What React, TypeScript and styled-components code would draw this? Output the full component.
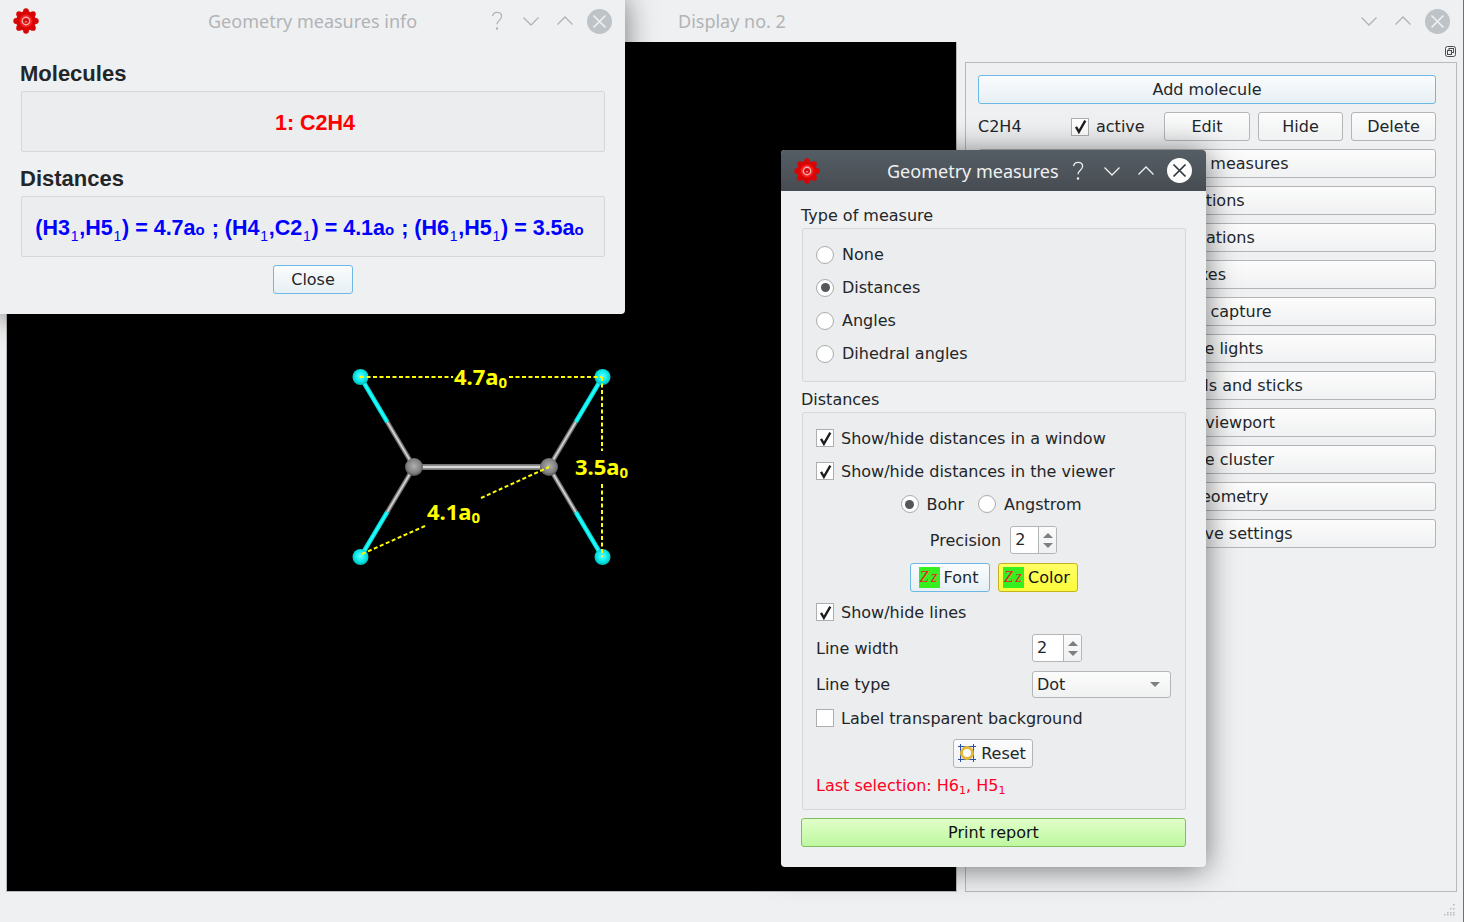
import React from "react";
import styled, { createGlobalStyle } from "styled-components";

const UI = `"DejaVu Sans", sans-serif`;
const TITLE = `"Noto Sans", "Open Sans", sans-serif`;
const HEAD = `"Liberation Sans", Arial, sans-serif`;

const Global = createGlobalStyle`
  html, body { margin: 0; padding: 0; background: #eff0f1; }
  body { width: 1464px; height: 922px; overflow: hidden; font-family: ${UI}; color: #232629; }
  * { box-sizing: border-box; }
`;

const Desktop = styled.div`
  position: relative;
  width: 1464px;
  height: 922px;
  overflow: hidden;
`;

const MainWindow = styled.div`
  width: 1464px;
  height: 922px;
  background: #eff0f1;
  border-right: 1px solid #6e7072;
  display: flex;
  flex-direction: column;
`;

const TitleBar = styled.div<{ $variant?: "active" | "info"; $h: number; $pad: number }>`
  flex: none;
  height: ${(p) => p.$h}px;
  padding: ${(p) => (p.$variant === "info" ? 4 : 0)}px ${(p) => p.$pad}px 0 ${(p) => (p.$variant === "info" ? 17 : 13)}px;
  display: flex;
  align-items: center;
  background: ${(p) => (p.$variant === "active" ? "linear-gradient(#555e65, #474c52)" : "#eff0f1")};
  color: ${(p) => (p.$variant === "active" ? "#eff0f1" : "#b1b4b7")};
  border-radius: ${(p) => (p.$variant === "active" ? "4px 4px 0 0" : "0")};
`;

const TitleText = styled.div<{ $left: number }>`
  position: absolute;
  left: ${(p) => p.$left}px;
  font: 18px ${TITLE};
  white-space: nowrap;
`;

const Controls = styled.div<{ $tail?: number }>`
  margin-left: auto;
  display: flex;
  align-items: center;
  gap: 10px;
  & > :last-child {
    margin-left: ${(p) => p.$tail ?? 0}px;
  }
`;

const ControlIcon = styled.svg`
  width: 24px;
  height: 24px;
  display: block;
  fill: none;
  stroke: currentColor;
  stroke-width: 1.3;
`;

const MainBody = styled.div`
  flex: none;
  height: 850px;
  display: flex;
  padding-left: 6px;
`;

const Viewer = styled.div`
  flex: none;
  width: 951px;
  height: 850px;
  background: #000;
  border: 1px solid #b7b9bb;
  border-top: 0;
`;

const MoleculeSvg = styled.svg`
  display: block;
  width: 949px;
  height: 849px;
`;

const SideColumn = styled.div`
  flex: 1;
  display: flex;
  flex-direction: column;
  padding: 4px 6px 0 8px;
`;

const FloatIcon = styled.svg`
  flex: none;
  align-self: flex-end;
  width: 11px;
  height: 11px;
  margin-right: 1px;
  margin-bottom: 5px;
  fill: none;
  stroke: #4a4d50;
  stroke-width: 1;
`;

const SideFrame = styled.div`
  flex: 1;
  border: 1px solid #b7b9bb;
  padding: 12px 20px 0 12px;
  display: flex;
  flex-direction: column;
  gap: 8px;
`;

const Button = styled.button<{ $tone?: "blue" | "yellow" | "green"; $w?: number }>`
  flex: ${(p) => (p.$w ? "none" : "initial")};
  width: ${(p) => (p.$w ? `${p.$w}px` : "auto")};
  height: 29px;
  padding: 0;
  border-radius: 3px;
  font: 16px ${UI};
  display: flex;
  align-items: center;
  justify-content: center;
  gap: 4px;
  color: ${(p) => (p.$tone === "yellow" || p.$tone === "green" ? "#111" : "#232629")};
  border: 1px solid
    ${(p) =>
      p.$tone === "blue" ? "#6cb8e6" : p.$tone === "yellow" ? "#c3b320" : p.$tone === "green" ? "#7fbf62" : "#b3b5b7"};
  background: ${(p) =>
    p.$tone === "blue"
      ? "linear-gradient(#fbfcfd, #e6eff4)"
      : p.$tone === "yellow"
      ? "linear-gradient(#ffff66, #fbfb3c)"
      : p.$tone === "green"
      ? "linear-gradient(#e0ffc8, #bef7a0)"
      : "linear-gradient(#fcfcfc, #f0f1f2)"};
`;

const IconButton = styled(Button)`
  padding-right: 3px;
`;

const MoleculeRow = styled.div`
  display: flex;
  align-items: center;
  height: 29px;
`;

const MoleculeName = styled.span`
  width: 93px;
  font-size: 16px;
`;

const ActiveCell = styled.label`
  width: 93px;
  display: flex;
  align-items: center;
  gap: 7px;
  font-size: 16px;
`;

const RowButtons = styled.div`
  display: flex;
  gap: 8px;
`;

const Footer = styled.div`
  flex: 1;
  display: flex;
  justify-content: flex-end;
  align-items: flex-start;
  padding: 12px 8px 0 0;
`;

const Grip = styled.svg`
  width: 11px;
  height: 12px;
  fill: #b9bbbd;
`;

const DialogShell = styled.div<{ $x: number; $y: number; $w: number; $h: number }>`
  position: absolute;
  left: ${(p) => p.$x}px;
  top: ${(p) => p.$y}px;
  width: ${(p) => p.$w}px;
  height: ${(p) => p.$h}px;
  background: #eff0f1;
  border-radius: 4px;
  box-shadow: 0 2px 30px rgba(0, 0, 0, 0.52);
`;

const InfoBody = styled.div`
  padding: 18px 20px 0 25px;
  display: flex;
  flex-direction: column;
`;

const InfoHeading = styled.div`
  font: bold 22px/27px ${HEAD};
  margin-left: -1px;
  height: 31px;
  color: #232629;
`;

const InfoBox = styled.div<{ $color: string; $mb: number; $pl?: number; $pr?: number }>`
  height: 61px;
  margin-bottom: ${(p) => p.$mb}px;
  background: #ecedee;
  border: 1px solid #d5d7d8;
  border-radius: 2px;
  display: flex;
  align-items: center;
  justify-content: center;
  color: ${(p) => p.$color};
  font: bold 21.5px ${HEAD};
  white-space: pre;
  padding: 3px ${(p) => p.$pr ?? 0}px 0 ${(p) => p.$pl ?? 0}px;
`;

const InfoLine = styled.span`
  sub {
    font-size: 14px;
    font-weight: 400;
    line-height: 0;
    vertical-align: -6px;
    margin: 0 0.75px;
  }
  small {
    font-size: 15px;
    margin-right: 1px;
  }
`;

const CloseRow = styled.div`
  display: flex;
  justify-content: center;
  margin-top: 8px;
`;

const GeoBody = styled.div`
  padding: 16px 20px 0 20px;
  display: flex;
  flex-direction: column;
`;

const GroupLabel = styled.div`
  height: 21px;
  line-height: 18px;
  font-size: 16px;
`;

const Group = styled.div<{ $pt: number; $pb: number; $mb: number }>`
  margin-left: 1px;
  padding: ${(p) => p.$pt}px 13px ${(p) => p.$pb}px 13px;
  margin-bottom: ${(p) => p.$mb}px;
  background: #ecedee;
  border: 1px solid #d5d7d8;
  border-radius: 2px;
`;

const Row = styled.div<{ $h: number; $center?: boolean; $gap?: number; $shift?: number }>`
  height: ${(p) => p.$h}px;
  display: flex;
  align-items: center;
  justify-content: ${(p) => (p.$center ? "center" : "flex-start")};
  gap: ${(p) => p.$gap ?? 7}px;
  padding-right: ${(p) => p.$shift ?? 0}px;
  font-size: 16px;
  white-space: nowrap;
`;

const RadioItem = styled.span`
  display: inline-flex;
  align-items: center;
  gap: 8px;
`;

const RadioDot = styled.span<{ $on?: boolean }>`
  flex: none;
  width: 18px;
  height: 18px;
  border-radius: 50%;
  border: 1px solid #a9abad;
  background: #fff;
  display: flex;
  align-items: center;
  justify-content: center;
  &::after {
    content: "";
    width: 9px;
    height: 9px;
    border-radius: 50%;
    background: ${(p) => (p.$on ? "#54585c" : "transparent")};
  }
`;

const CheckBox = styled.span`
  flex: none;
  width: 18px;
  height: 18px;
  border: 1px solid #acaeb0;
  background: #fff;
  display: flex;
  align-items: center;
  justify-content: center;
  svg {
    width: 15px;
    height: 15px;
    display: block;
  }
`;

const FormGrid = styled.div<{ $h: number }>`
  height: ${(p) => p.$h}px;
  display: grid;
  grid-template-columns: 216px 1fr;
  align-items: center;
  font-size: 16px;
`;

const Spin = styled.div<{ $w: number; $field: number }>`
  width: ${(p) => p.$w}px;
  height: 28px;
  background: #fff;
  border: 1px solid #b3b5b7;
  border-radius: 3px;
  display: grid;
  grid-template-columns: ${(p) => p.$field}px 1fr;
  font-size: 16px;
`;

const SpinValue = styled.span`
  padding-left: 4px;
  line-height: 26px;
  border-right: 1px solid #b3b5b7;
`;

const SpinArrows = styled.span`
  background: linear-gradient(#fbfbfb, #eff0f1);
  border-radius: 0 2px 2px 0;
  display: flex;
  flex-direction: column;
  align-items: center;
  justify-content: center;
  gap: 5px;
`;

const ArrowUp = styled.i`
  width: 0;
  height: 0;
  border-left: 5px solid transparent;
  border-right: 5px solid transparent;
  border-bottom: 5px solid #7d8083;
`;

const ArrowDown = styled(ArrowUp)`
  border-bottom: 0;
  border-top: 5px solid #7d8083;
`;

const Combo = styled.div`
  width: 139px;
  height: 27px;
  padding: 0 10px 0 4px;
  border: 1px solid #b3b5b7;
  border-radius: 3px;
  background: linear-gradient(#fcfcfc, #f0f1f2);
  display: flex;
  align-items: center;
  justify-content: space-between;
`;

const ZzIcon = styled.span`
  flex: none;
  width: 21px;
  height: 21px;
  background: #35f01e;
  color: #f01c2a;
  font: italic 16px/20px "Liberation Serif", serif;
  letter-spacing: 2.5px;
  text-indent: 1px;
  text-align: left;
`;

const ResetIcon = styled.svg`
  flex: none;
  width: 20px;
  height: 20px;
`;

const LastSelection = styled.div`
  height: 26px;
  line-height: 28px;
  font-size: 16px;
  color: #ff0022;
  sub {
    font-size: 11px;
    line-height: 0;
    vertical-align: -3px;
  }
`;

const SideButtons = [
  "Geometry measures",
  "Rotations",
  "Translations",
  "Axes",
  "Window capture",
  "Manage lights",
  "Scale of balls and sticks",
  "Change viewport",
  "Generate cluster",
  "Build geometry",
  "Load or save settings",
];

function Gear() {
  const lobes = Array.from({ length: 8 }, (_, i) => (i * Math.PI) / 4);
  return (
    <svg width="26" height="26" viewBox="-13 -13 26 26" style={{ display: "block", flex: "none" }}>
      <circle r="10" fill="#d80606" />
      {lobes.map((a, i) => (
        <circle key={i} cx={Math.cos(a) * 9.8} cy={Math.sin(a) * 9.8} r="2.900" fill="#d80505" />
      ))}
      <circle r="6.400" fill="#f51f1f" />
      <circle r="4.400" fill="#f7b0b0" />
      <circle r="3" fill="#d40a0a" />
      <path d="M-1.500 1.200a1.700 1.700 0 0 1 3 0z" fill="#f7c0c0" />
    </svg>
  );
}

function Help() {
  return (
    <ControlIcon viewBox="0 0 24 24">
      <path d="M7.5 7.2c.5-2.6 2.4-3.9 4.6-3.9 2.600 0 4.500 1.700 4.500 4 0 3.900-4.600 3.800-4.600 8" />
      <circle cx="12" cy="19.500" r=".6" fill="currentColor" />
    </ControlIcon>
  );
}
function Down() {
  return (
    <ControlIcon viewBox="0 0 24 24">
      <path d="M4.500 8.500 12 16l7.500-7.500" />
    </ControlIcon>
  );
}
function Up() {
  return (
    <ControlIcon viewBox="0 0 24 24">
      <path d="M4.500 15.500 12 8l7.500 7.500" />
    </ControlIcon>
  );
}
function CloseCircle({ fill, cross }: { fill: string; cross: string }) {
  return (
    <svg width="25" height="25" viewBox="0 0 25 25" style={{ display: "block" }}>
      <circle cx="12.5" cy="12.5" r="12.5" fill={fill} />
      <path d="M6.500 6.500l12 12M18.500 6.500l-12 12" stroke={cross} strokeWidth="1.700" />
    </svg>
  );
}

function Check() {
  return (
    <svg viewBox="0 0 14 14">
      <path d="M2.800 7.300 5.500 12 11.500 1.500" fill="none" stroke="#1b1d1f" strokeWidth="2.200" />
    </svg>
  );
}

function CheckRow({ h, on, children }: { h: number; on?: boolean; children: React.ReactNode }) {
  return (
    <Row $h={h}>
      <CheckBox>{on && <Check />}</CheckBox>
      {children}
    </Row>
  );
}

function Radio({ on, children }: { on?: boolean; children: React.ReactNode }) {
  return (
    <RadioItem>
      <RadioDot $on={on} />
      {children}
    </RadioItem>
  );
}

function SpinBox({ w, field, value }: { w: number; field: number; value: string }) {
  return (
    <Spin $w={w} $field={field}>
      <SpinValue>{value}</SpinValue>
      <SpinArrows>
        <ArrowUp />
        <ArrowDown />
      </SpinArrows>
    </Spin>
  );
}

function Molecule() {
  const hs = [
    [360.5, 377],
    [602.5, 377],
    [360.5, 557],
    [602.5, 557],
  ];
  const cs = [
    [414, 467],
    [549, 467],
    [414, 467],
    [549, 467],
  ];
  return (
    <MoleculeSvg viewBox="7 42 949 849">
      <defs>
        <radialGradient id="hAtom" cx="50%" cy="45%" r="55%">
          <stop offset="0" stopColor="#66ffff" />
          <stop offset="0.6" stopColor="#08eaea" />
          <stop offset="1" stopColor="#00b8b8" />
        </radialGradient>
        <radialGradient id="cAtom" cx="50%" cy="45%" r="55%">
          <stop offset="0" stopColor="#b0b0b0" />
          <stop offset="0.7" stopColor="#808080" />
          <stop offset="1" stopColor="#505050" />
        </radialGradient>
      </defs>
      <line x1="414" y1="467" x2="549" y2="467" stroke="#777" strokeWidth="6" />
      <line x1="414" y1="467" x2="549" y2="467" stroke="#d8d8d8" strokeWidth="2.500" />
      {hs.map(([hx, hy], i) => {
        const [cx, cy] = cs[i];
        const mx = (hx + cx) / 2;
        const my = (hy + cy) / 2;
        return (
          <g key={i}>
            <line x1={mx} y1={my} x2={cx} y2={cy} stroke="#747474" strokeWidth="4.500" />
            <line x1={mx} y1={my} x2={cx} y2={cy} stroke="#d0d0d0" strokeWidth="1.800" />
            <line x1={mx} y1={my} x2={hx} y2={hy} stroke="#06dede" strokeWidth="4.500" />
            <line x1={mx} y1={my} x2={hx} y2={hy} stroke="#22ffff" strokeWidth="2" />
          </g>
        );
      })}
      {cs.slice(0, 2).map(([x, y]) => (
        <circle key={x} cx={x} cy={y} r="9" fill="url(#cAtom)" />
      ))}
      {hs.map(([x, y]) => (
        <circle key={`${x}-${y}`} cx={x} cy={y} r="8" fill="url(#hAtom)" />
      ))}
      <g stroke="#ffff00" strokeWidth="2" strokeDasharray="4 2.500" fill="none">
        <path d="M360 377H453M509 377H602M602 377V451M602 484V557" />
        <path d="M362 554 425 526M481 498 549 467" />
      </g>
      <g fill="#ffff00" fontFamily={TITLE} fontWeight="700" fontSize="22">
        <text x="454" y="385">
          4.7a<tspan fontSize="15" dy="3">0</tspan>
        </text>
        <text x="575" y="475">
          3.5a<tspan fontSize="15" dy="3">0</tspan>
        </text>
        <text x="427" y="520">
          4.1a<tspan fontSize="15" dy="3">0</tspan>
        </text>
      </g>
    </MoleculeSvg>
  );
}

export default function App() {
  return (
    <Desktop>
      <Global />
      <MainWindow>
        <TitleBar $h={42} $pad={13}>
          <TitleText $left={678}>Display no. 2</TitleText>
          <Controls>
            <Down />
            <Up />
            <CloseCircle fill="#bdc3c7" cross="#eff0f1" />
          </Controls>
        </TitleBar>
        <MainBody>
          <Viewer>
            <Molecule />
          </Viewer>
          <SideColumn>
            <FloatIcon viewBox="0 0 11 11">
              <rect x=".5" y=".5" width="10" height="10" rx="2" />
              <rect x="4" y="2.500" width="4.500" height="4" />
              <rect x="2.500" y="4.500" width="4" height="4" fill="#eff0f1" />
            </FloatIcon>
            <SideFrame>
              <Button $tone="blue">Add molecule</Button>
              <MoleculeRow>
                <MoleculeName>C2H4</MoleculeName>
                <ActiveCell>
                  <CheckBox>
                    <Check />
                  </CheckBox>
                  active
                </ActiveCell>
                <RowButtons>
                  <Button $w={86}>Edit</Button>
                  <Button $w={85}>Hide</Button>
                  <Button $w={85}>Delete</Button>
                </RowButtons>
              </MoleculeRow>
              {SideButtons.map((b) => (
                <Button key={b}>{b}</Button>
              ))}
            </SideFrame>
          </SideColumn>
        </MainBody>
        <Footer>
          <Grip viewBox="0 0 11 12">
            {[
              [9, 0],
              [6, 4],
              [9, 4],
              [3, 8],
              [6, 8],
              [9, 8],
              [0, 10],
              [3, 10],
              [6, 10],
              [9, 10],
            ].map(([x, y]) => (
              <rect key={`${x}-${y}`} x={x} y={y} width="1.500" height="1.500" />
            ))}
          </Grip>
        </Footer>
      </MainWindow>

      <DialogShell $x={-4} $y={-4} $w={629} $h={318}>
        <TitleBar $variant="info" $h={46} $pad={13}>
          <Gear />
          <TitleText $left={212}>Geometry measures info</TitleText>
          <Controls>
            <Help />
            <Down />
            <Up />
            <CloseCircle fill="#bdc3c7" cross="#eff0f1" />
          </Controls>
        </TitleBar>
        <InfoBody>
          <InfoHeading>Molecules</InfoHeading>
          <InfoBox $color="#ff0000" $mb={13} $pl={4}>
            1: C2H4
          </InfoBox>
          <InfoHeading>Distances</InfoHeading>
          <InfoBox $color="#0000ff" $mb={0} $pr={6}>
            <InfoLine>
              (H3<sub>1</sub>,H5<sub>1</sub>) = 4.7a<small>o</small> ; (H4<sub>1</sub>,C2<sub>1</sub>) = 4.1a
              <small>o</small> ; (H6<sub>1</sub>,H5<sub>1</sub>) = 3.5a<small>o</small>
            </InfoLine>
          </InfoBox>
          <CloseRow>
            <Button $tone="blue" $w={80}>
              Close
            </Button>
          </CloseRow>
        </InfoBody>
      </DialogShell>

      <DialogShell $x={781} $y={150} $w={425} $h={717}>
        <TitleBar $variant="active" $h={41} $pad={14}>
          <Gear />
          <TitleText $left={106}>Geometry measures</TitleText>
          <Controls $tail={-1}>
            <Help />
            <Down />
            <Up />
            <CloseCircle fill="#fcfcfc" cross="#31363b" />
          </Controls>
        </TitleBar>
        <GeoBody>
          <GroupLabel>Type of measure</GroupLabel>
          <Group $pt={9} $pb={11} $mb={9}>
            <Row $h={33}>
              <Radio>None</Radio>
            </Row>
            <Row $h={33}>
              <Radio on>Distances</Radio>
            </Row>
            <Row $h={33}>
              <Radio>Angles</Radio>
            </Row>
            <Row $h={33}>
              <Radio>Dihedral angles</Radio>
            </Row>
          </Group>
          <GroupLabel>Distances</GroupLabel>
          <Group $pt={9} $pb={11} $mb={8}>
            <CheckRow h={32} on>
              Show/hide distances in a window
            </CheckRow>
            <CheckRow h={34} on>
              Show/hide distances in the viewer
            </CheckRow>
            <Row $h={32} $center $gap={14} $shift={6}>
              <Radio on>Bohr</Radio>
              <Radio>Angstrom</Radio>
            </Row>
            <Row $h={40} $center $gap={9} $shift={1}>
              Precision
              <SpinBox w={47} field={28} value="2" />
            </Row>
            <Row $h={34} $center $gap={8}>
              <IconButton $tone="blue" $w={80}>
                <ZzIcon>Zz</ZzIcon>
                Font
              </IconButton>
              <IconButton $tone="yellow" $w={80}>
                <ZzIcon>Zz</ZzIcon>
                Color
              </IconButton>
            </Row>
            <CheckRow h={36} on>
              Show/hide lines
            </CheckRow>
            <FormGrid $h={36}>
              Line width
              <SpinBox w={50} field={31} value="2" />
            </FormGrid>
            <FormGrid $h={36}>
              Line type
              <Combo>
                Dot
                <ArrowDown />
              </Combo>
            </FormGrid>
            <CheckRow h={32}>Label transparent background</CheckRow>
            <Row $h={38} $center $shift={2}>
              <IconButton $w={80}>
                <ResetIcon viewBox="0 0 20 20">
                  <path d="M1 3.500H19M1 16.500H19M3.500 1V19M16.500 1V19" stroke="#2a4fa8" strokeWidth="1" fill="none" />
                  <circle cx="10" cy="10" r="5.500" fill="none" stroke="#e6b93c" strokeWidth="3" />
                  <circle cx="10" cy="10" r="3.500" fill="#fdfdfd" />
                </ResetIcon>
                Reset
              </IconButton>
            </Row>
            <LastSelection>
              Last selection: H6<sub>1</sub>, H5<sub>1</sub>
            </LastSelection>
          </Group>
          <Button $tone="green">Print report</Button>
        </GeoBody>
      </DialogShell>
    </Desktop>
  );
}
